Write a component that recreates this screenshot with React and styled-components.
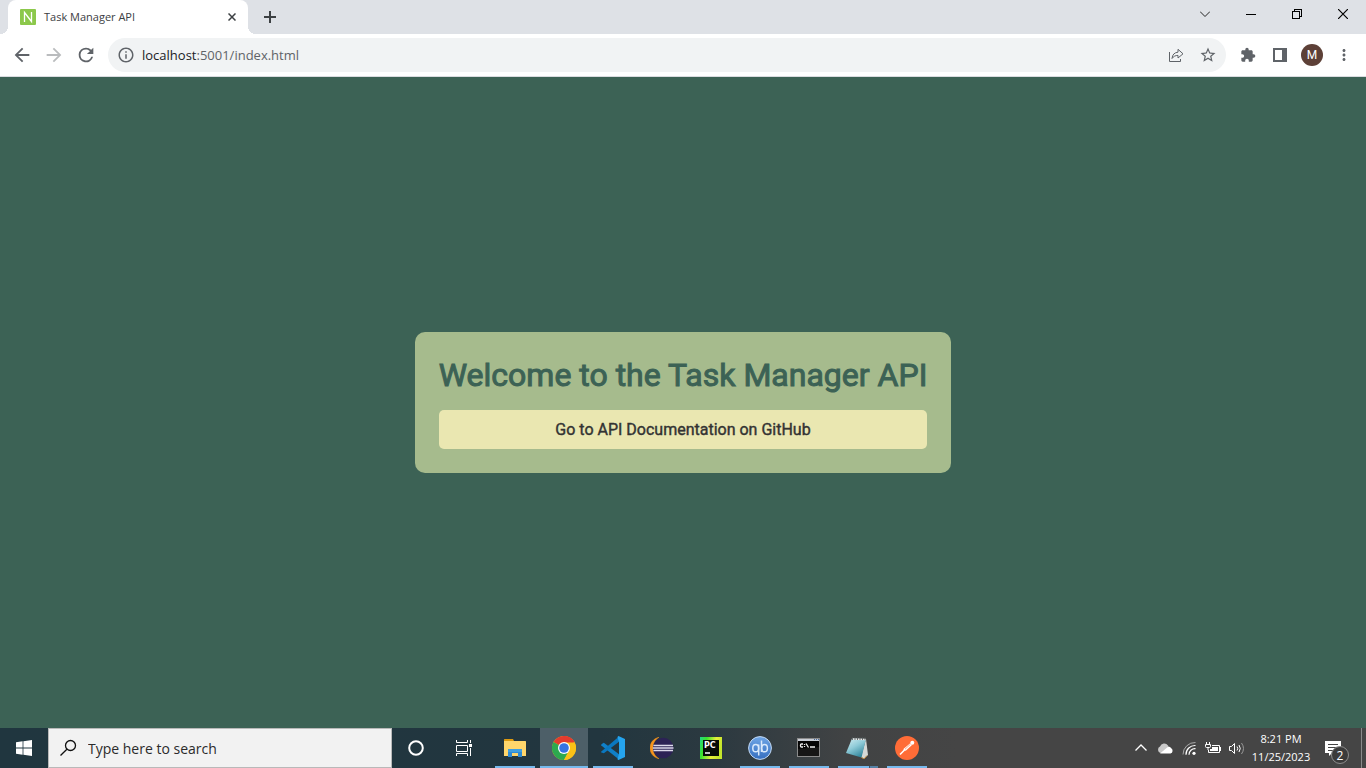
import React from "react";
import styled, { createGlobalStyle, css } from "styled-components";

const GlobalStyle = createGlobalStyle`
  * { box-sizing: border-box; }
  body { margin: 0; font-family: "Open Sans", "Noto Sans", sans-serif; }
  button { font: inherit; color: inherit; border: 0; padding: 0; background: none; cursor: pointer; }
  svg { display: block; flex: none; }
`;

const Desktop = styled.div`
  display: flex;
  flex-direction: column;
  min-height: 100vh;
`;

const center = css`
  display: flex;
  align-items: center;
  justify-content: center;
`;

/* ---------- browser ---------- */

const TabStrip = styled.header`
  display: flex;
  height: 34px;
  padding-left: 8px;
  background: #dee1e6;
`;

const Tab = styled.div`
  position: relative;
  display: flex;
  align-items: center;
  gap: 8px;
  width: 240px;
  padding: 0 8px 0 12px;
  border-radius: 8px 8px 0 0;
  background: #fff;
  color: #3c4043;

  &::before,
  &::after {
    content: "";
    position: absolute;
    bottom: 0;
    width: 8px;
    height: 8px;
  }
  &::before {
    right: 100%;
    background: radial-gradient(circle at 0 0, transparent 8px, #fff 8px);
  }
  &::after {
    left: 100%;
    background: radial-gradient(circle at 100% 0, transparent 8px, #fff 8px);
  }
`;

const TabTitle = styled.span`
  flex: 1;
  font-size: 11px;
  line-height: 16px;
`;

const TabButton = styled.button`
  ${center}
  width: ${(p) => p.$size}px;
  height: ${(p) => p.$size}px;
`;

const NewTab = styled(TabButton)`
  margin: 3px 0 0 8px;
`;

const WindowControls = styled.div`
  display: flex;
  margin-left: auto;
  height: 28px;
`;

const WindowButton = styled.button`
  ${center}
  width: 46px;
`;

const Toolbar = styled.nav`
  display: flex;
  align-items: center;
  height: 43px;
  padding: 0 6px;
  background: #fff;
  border-bottom: 1px solid #dadce0;
`;

const ToolButton = styled.button`
  ${center}
  width: 32px;
  height: 32px;
  flex: none;
`;

const AddressBar = styled.div`
  flex: 1;
  display: flex;
  align-items: center;
  height: 34px;
  margin: 0 6px;
  padding: 0 2px 0 9px;
  border-radius: 17px;
  background: #f1f3f4;
`;

const Address = styled.div`
  flex: 1;
  padding-left: 7px;
  font-size: 13px;
  line-height: 20px;
  color: #5f6368;

  b { font-weight: 400; color: #202124; }
`;

const Avatar = styled.span`
  ${center}
  width: 22px;
  height: 22px;
  border-radius: 50%;
  background: #5d4037;
  color: #fff;
  font: 12px Roboto, sans-serif;
`;

/* ---------- page ---------- */

const Page = styled.main`
  ${center}
  flex: 1;
  background: #3c6255;
  font-family: Roboto, sans-serif;
`;

const Card = styled.section`
  display: flex;
  flex-direction: column;
  gap: 16px;
  padding: 24px;
  border-radius: 10px;
  background: #a6bb8d;
`;

const Heading = styled.h1`
  margin: 0;
  font-size: 32px;
  font-weight: 400;
  line-height: 38px;
  color: #3c6255;
  -webkit-text-stroke: 1px currentColor;
`;

const DocsLink = styled.a`
  padding: 10px;
  border-radius: 5px;
  background: #eae7b1;
  color: #333;
  font-size: 16px;
  line-height: 19px;
  text-align: center;
  text-decoration: none;
  -webkit-text-stroke: 0.025em currentColor;
`;

/* ---------- taskbar ---------- */

const Taskbar = styled.footer`
  display: flex;
  height: 40px;
  background: linear-gradient(90deg, #20363f 0%, #22363f 44%, #2b3940 52%, #414344 62%, #454545 70%, #454545 100%);
  color: #fff;
`;

const TaskButton = styled.button`
  ${center}
  position: relative;
  width: 48px;
  height: 40px;
  flex: none;
  background: ${(p) => (p.$active ? "#4d5f68" : "none")};

  &::after {
    content: "";
    display: ${(p) => (p.$open ? "block" : "none")};
    position: absolute;
    bottom: 0;
    left: ${(p) => (p.$active ? 0 : 4)}px;
    right: ${(p) => (p.$active ? 0 : 4)}px;
    height: 2px;
    background: ${(p) => (p.$stacked ? "linear-gradient(90deg, #76b9ed 31px, #3a5468 31px, #3a5468 32px, #5682a6 32px)" : "#76b9ed")};
  }
`;

const Search = styled.label`
  display: flex;
  align-items: center;
  gap: 10px;
  width: 344px;
  padding-left: 11px;
  background: #f2f2f2;
  border: 1px solid #b9b9b9;

  input {
    flex: 1;
    min-width: 0;
    padding: 0;
    border: 0;
    outline: 0;
    background: none;
    font: 14px "Open Sans", sans-serif;
    color: #2b2b2b;
  }
  input::placeholder { color: #2b2b2b; opacity: 1; }
`;

const Apps = styled.div`
  display: flex;
  gap: 1px;
  padding-left: 3px;
`;

const Tray = styled.div`
  display: flex;
  align-items: stretch;
  margin-left: auto;
`;

const TrayButton = styled.button`
  ${center}
  width: 24px;
`;

const Clock = styled.button`
  width: 64px;
  font-size: 11px;
  line-height: 18px;
  text-align: center;
`;

const Notifications = styled.button`
  ${center}
  position: relative;
  width: 40px;
`;

const Count = styled.span`
  ${center}
  position: absolute;
  left: 18px;
  top: 18px;
  width: 18px;
  height: 18px;
  border: 1px solid #8d8d8d;
  border-radius: 50%;
  background: #3b3b3b;
  font-size: 12px;
`;

const ShowDesktop = styled.button`
  width: 5px;
  margin-left: 8px;
  border-left: 1px solid #8a8a8a;
`;

/* ---------- icons ---------- */

function Material({ d, size = 20, color = "#5f6368" }) {
  return (
    <svg width={size} height={size} viewBox="0 0 24 24" fill={color} aria-hidden="true">
      <path d={d} />
    </svg>
  );
}

function Stroke({ d, w, h, color = "#000", width = 1, crisp }) {
  return (
    <svg width={w} height={h} viewBox={`0 0 ${w} ${h}`} fill="none" stroke={color} strokeWidth={width} shapeRendering={crisp ? "crispEdges" : "auto"} aria-hidden="true">
      <path d={d} />
    </svg>
  );
}

const paths = {
  back: "M20 11H7.83l5.59-5.59L12 4l-8 8 8 8 1.41-1.41L7.83 13H20v-2z",
  forward: "M12 4l-1.41 1.41L16.17 11H4v2h12.17l-5.58 5.59L12 20l8-8z",
  reload: "M17.65 6.35A7.96 7.96 0 0 0 12 4a8 8 0 1 0 7.73 10h-2.08A6 6 0 1 1 12 6c1.66 0 3.14.69 4.22 1.78L13 11h7V4l-2.35 2.35z",
  info: "M11 7h2v2h-2zm0 4h2v6h-2zm1-9C6.48 2 2 6.48 2 12s4.48 10 10 10 10-4.48 10-10S17.52 2 12 2zm0 18c-4.41 0-8-3.59-8-8s3.59-8 8-8 8 3.59 8 8-3.59 8-8 8z",
  star: "M22 9.24l-7.19-.62L12 2 9.19 8.63 2 9.24l5.46 4.73L5.82 21 12 17.27 18.18 21l-1.63-7.03L22 9.24zM12 15.4l-3.76 2.27 1-4.28-3.32-2.88 4.38-.38L12 6.1l1.71 4.04 4.38.38-3.32 2.88 1 4.28L12 15.4z",
  puzzle: "M20.5 11H19V7c0-1.1-.9-2-2-2h-4V3.5a2.5 2.5 0 0 0-5 0V5H4c-1.1 0-1.99.9-1.99 2v3.8H3.5c1.49 0 2.7 1.21 2.7 2.7s-1.21 2.7-2.7 2.7H2V20c0 1.1.9 2 2 2h3.8v-1.5c0-1.49 1.21-2.7 2.7-2.7s2.7 1.21 2.7 2.7V22H17c1.1 0 2-.9 2-2v-4h1.5a2.5 2.5 0 0 0 0-5z",
  more: "M12 8c1.1 0 2-.9 2-2s-.9-2-2-2-2 .9-2 2 .9 2 2 2zm0 2c-1.1 0-2 .9-2 2s.9 2 2 2 2-.9 2-2-.9-2-2-2zm0 6c-1.1 0-2 .9-2 2s.9 2 2 2 2-.9 2-2-.9-2-2-2z",
};

const Favicon = () => (
  <svg width="16" height="16" viewBox="0 0 16 16" aria-hidden="true">
    <rect width="16" height="16" rx="1" fill="#8cc84b" />
    <path d="M4.5 13V3.5L11.5 12.5V3" fill="none" stroke="#fff" strokeWidth="1.3" />
  </svg>
);

const ShareIcon = () => (
  <svg width="16" height="16" viewBox="0 0 16 16" fill="none" stroke="#5f6368" aria-hidden="true">
    <path d="M1.5 5V14.5H12.5V12" />
    <path d="M4 11.5C4.4 7.5 6.5 5.5 10 5.2V2.3L15 6.8L10 11V8.4C7.5 8.4 5.5 9.3 4 11.5Z" strokeLinejoin="round" />
  </svg>
);

const SidePanelIcon = () => (
  <svg width="14" height="14" viewBox="0 0 14 14" aria-hidden="true">
    <path fill="#5f6368" fillRule="evenodd" d="M0 0H14V14H0ZM2 2V12H9V2Z" />
  </svg>
);

const WindowsIcon = () => (
  <svg width="16" height="16" viewBox="0 0 16 16" fill="#fff" aria-hidden="true">
    <path d="M0 2.2L6.6 1.3V7.6H0ZM7.4 1.2L16 0V7.6H7.4ZM0 8.4H6.6V14.7L0 13.8ZM7.4 8.4H16V16L7.4 14.8Z" />
  </svg>
);

const SearchIcon = () => (
  <svg width="18" height="18" viewBox="0 0 18 18" fill="none" stroke="#111" strokeWidth="1.3" aria-hidden="true">
    <circle cx="10.5" cy="6.5" r="5" />
    <path d="M6.900 10.2L.5 16.5" />
  </svg>
);

const CortanaIcon = () => (
  <svg width="16" height="16" viewBox="0 0 16 16" aria-hidden="true">
    <circle cx="8" cy="8" r="6.8" fill="none" stroke="#fff" strokeWidth="2" />
  </svg>
);

const TaskViewIcon = () => (
  <svg width="17" height="16" viewBox="0 0 17 16" fill="none" stroke="#fff" aria-hidden="true">
    <path d="M.5 0V2.5H11.5V0M.5 5.5H11.5V11.5H.5ZM.5 16V13.5H11.5V16M14.5 0V3M14.5 8V16" />
    <path fill="#fff" stroke="none" d="M13 4H16V7H13Z" />
  </svg>
);

const FolderIcon = () => (
  <svg width="22" height="20" viewBox="0 0 22 20" aria-hidden="true">
    <path d="M0 3H21.5Q22 3 22 3.5V18H0Z" fill="#ffd66b" />
    <path d="M0 1.5Q0 1 .5 1H9L10 3H0Z" fill="#dd9a10" />
    <path d="M4 19V12Q4 11 5 11H17Q18 11 18 12V19H14V15H8V19Z" fill="#2f8ad2" />
    <path d="M4 14V12Q4 11 5 11H17Q18 11 18 12V14Z" fill="#3f9fe0" />
  </svg>
);

const ChromeIcon = () => (
  <svg width="24" height="24" viewBox="0 0 24 24" aria-hidden="true">
    <circle cx="12" cy="12" r="12" fill="#fbc116" />
    <path d="M12 12L1.6 6A12 12 0 0 1 22.4 6Z" fill="#e33b2e" />
    <path d="M12 6.5H22.7A12 12 0 0 0 12 0Z" fill="#e33b2e" />
    <path d="M12 12L1.6 6A12 12 0 0 0 12 24L17 14.7Z" fill="#2da94f" />
    <path d="M17 14.7L12 24A12 12 0 0 0 22.7 6.5H12Z" fill="#fbc116" />
    <circle cx="12" cy="12" r="6" fill="#fff" />
    <circle cx="12" cy="12" r="4.8" fill="#3574e2" />
  </svg>
);

const CodeIcon = () => (
  <svg width="24" height="24" viewBox="0 0 24 24" aria-hidden="true">
    <path d="M.3 8.5L2.2 7Q2.7 6.7 3.2 7L18 18.3V23.6L.3 9.5Q-.1 9 .3 8.5Z" fill="#1080c8" />
    <path d="M.3 15.5L18 .4V5.7L3.2 17Q2.7 17.3 2.2 17L.3 16.5Q-.1 16 .3 15.5Z" fill="#0a78c0" />
    <path d="M17.5 0L24 3V21L17.5 24Q16.7 24 16.5 23L18 18V6L16.5 1.2Q16.7 .2 17.5 0Z" fill="#25a4ee" />
  </svg>
);

const EclipseIcon = () => (
  <svg width="24" height="22" viewBox="0 0 24 22" aria-hidden="true">
    <path d="M9 .3C-3 3 -3 19 9 21.7C1 17.5 1 4.5 9 .3Z" fill="#f7941e" stroke="#f7941e" strokeWidth=".5" />
    <circle cx="13.2" cy="11" r="10.3" fill="#2c2255" />
    <path d="M3.4 8.5H23M2.8 11H23.5M3.4 13.5H23" stroke="#dcd9ea" strokeWidth="1.6" />
  </svg>
);

const AppLetters = styled.text`
  font-family: ${(p) => p.$family};
  font-size: ${(p) => p.$size}px;
  font-weight: ${(p) => p.$weight || 400};
  fill: #fff;
`;

const PyCharmIcon = () => (
  <svg width="22" height="22" viewBox="0 0 22 22" aria-hidden="true">
    <defs>
      <linearGradient id="pycharm" x1="0" y1="0" x2="1" y2="0.3">
        <stop offset="0" stopColor="#21d789" />
        <stop offset="0.3" stopColor="#3be22c" />
        <stop offset="0.7" stopColor="#e8ef3a" />
        <stop offset="1" stopColor="#c4e52c" />
      </linearGradient>
    </defs>
    <rect width="22" height="22" fill="url(#pycharm)" />
    <rect x="3" y="3" width="16" height="16" fill="#070d08" />
    <AppLetters x="4" y="11" $family='"DejaVu Sans", sans-serif' $size={8} $weight={700}>PC</AppLetters>
    <path d="M5 16H10" stroke="#fff" strokeWidth="1.5" />
  </svg>
);

const TorrentIcon = () => (
  <svg width="24" height="24" viewBox="0 0 24 24" aria-hidden="true">
    <defs>
      <linearGradient id="torrent" x1="0" y1="0" x2="0" y2="1">
        <stop offset="0" stopColor="#6fa6e6" />
        <stop offset="1" stopColor="#356ebf" />
      </linearGradient>
    </defs>
    <circle cx="12" cy="12" r="11.4" fill="url(#torrent)" stroke="#c4daf4" strokeWidth="1" />
    <g fill="none" stroke="#d9e9fb" strokeWidth="1.5">
      <ellipse cx="7.7" cy="12.2" rx="2.9" ry="3.6" />
      <path d="M10.7 8.5V19.5M13.5 4.5V16" />
      <ellipse cx="16.5" cy="12.2" rx="2.9" ry="3.6" />
    </g>
  </svg>
);

const TerminalIcon = () => (
  <svg width="24" height="20" viewBox="0 0 24 20" aria-hidden="true">
    <rect x=".5" y=".5" width="22" height="18" fill="#050505" stroke="#8b8b8b" />
    <path d="M1 1H22V3H1Z" fill="#c9ced6" />
    <path d="M17 1.5H18M19 1.5H20M21 1.5H22" stroke="#496b9c" />
    <path d="M6 6H4.5Q3.5 6 3.5 7V8Q3.5 9 4.5 9H6M7.5 6V7M7.5 8V9M9 5.5L11.500 9.5M13 9H18" fill="none" stroke="#eee" strokeWidth="1.3" />
    <path d="M1 11L22 9V18H1Z" fill="#fff" opacity=".07" />
  </svg>
);

const NotepadIcon = () => (
  <svg width="24" height="22" viewBox="0 0 24 22" aria-hidden="true">
    <defs>
      <linearGradient id="notepad" x1="0" y1="0" x2="0.6" y2="1">
        <stop offset="0" stopColor="#d6eef2" />
        <stop offset=".5" stopColor="#8fcbd8" />
        <stop offset="1" stopColor="#35899e" />
      </linearGradient>
    </defs>
    <path d="M20 2L22 18L18 22L15 20Z" fill="#d5d8d6" />
    <path d="M15 20L18 22L21 18.5" fill="none" stroke="#b9853b" />
    <path d="M6 1.5L20 2L15.5 20.500L0 16Z" fill="url(#notepad)" />
    <path d="M6 2L20 2.500" stroke="#e9e9e9" strokeWidth="1.5" />
    <path d="M6.500 0V3M9 0V3M11.500 0V3M14 0V3M16.500 0V3M19 0V3" stroke="#4f5556" strokeWidth=".8" />
  </svg>
);

const PostmanIcon = () => (
  <svg width="24" height="24" viewBox="0 0 24 24" aria-hidden="true">
    <circle cx="12" cy="12" r="12" fill="#ff6c37" />
    <circle cx="17.3" cy="6.8" r="2" fill="#fff" />
    <path d="M15.3 7.2L17 9.1L10.8 14.8L8.500 14.5L8.7 12.8Z" fill="#fff" />
    <path d="M9.5 14L5 18.5" stroke="#fff" strokeWidth="1.6" />
    <path d="M10 13.2L15.5 8.2" stroke="#ff6c37" strokeWidth=".6" />
  </svg>
);

const CloudIcon = () => (
  <svg width="16" height="11" viewBox="0 0 16 11" aria-hidden="true">
    <path d="M3.5 10A3.5 3.5 0 0 1 3 3.5A4.5 4.5 0 0 1 11 2.5L13 6L6 10Z" fill="#c9c9c9" />
    <path d="M3 10.5L9 5.5Q12 2.5 14 5A3 3 0 0 1 13.5 10.5Z" fill="#fff" />
  </svg>
);

const WifiIcon = () => (
  <svg width="14" height="14" viewBox="0 0 14 14" fill="none" stroke="#fff" aria-hidden="true">
    <path d="M1 13.5A12 12 0 0 1 13.5 1.5" stroke="#aaa" />
    <path d="M4 13.7A9 9 0 0 1 13.5 4.5M7 13.7A6 6 0 0 1 13.5 7.7" strokeWidth="1.2" />
    <circle cx="12" cy="12.3" r="1.600" fill="#fff" stroke="none" />
  </svg>
);

const BatteryIcon = () => (
  <svg width="16" height="12" viewBox="0 0 16 12" fill="none" stroke="#fff" aria-hidden="true">
    <path d="M7 3.5H14.5V10.5H3.5V8M15.5 5V9M1.5 0V2M4.5 0V2M.5 2.5H5.5V4.5Q5.5 5.5 4.5 5.5H1.5Q.5 5.5 .5 4.5ZM3 6V8" />
    <path d="M7 5H13V9H5V7H7Z" fill="#fff" stroke="none" />
  </svg>
);

const VolumeIcon = () => (
  <svg width="16" height="13" viewBox="0 0 16 13" fill="none" stroke="#fff" aria-hidden="true">
    <path d="M.5 4.5H2.5L5.5 1.5V11.5L2.5 8.5H.5Z" />
    <path d="M8 4.5Q9.5 6.5 8 8.5M10 3Q12.5 6.5 10 10" />
    <path d="M12.500 1Q16.5 6.5 12.500 12" stroke="#999" />
  </svg>
);

const MessageIcon = () => (
  <svg width="16" height="17" viewBox="0 0 16 17" aria-hidden="true">
    <path d="M0 1H16V13H7L4 16V13H0Z" fill="#fff" />
    <path d="M3 4.5H13M3 7.5H13M3 10.5H9" stroke="#454545" />
  </svg>
);

const apps = [
  { name: "File Explorer", Icon: FolderIcon, open: true },
  { name: "Google Chrome", Icon: ChromeIcon, open: true, active: true },
  { name: "Visual Studio Code", Icon: CodeIcon, open: true },
  { name: "Eclipse", Icon: EclipseIcon },
  { name: "PyCharm", Icon: PyCharmIcon },
  { name: "qBittorrent", Icon: TorrentIcon, open: true },
  { name: "Command Prompt", Icon: TerminalIcon, open: true },
  { name: "Notepad", Icon: NotepadIcon, open: true, stacked: true },
  { name: "Postman", Icon: PostmanIcon, open: true },
];

export default function App() {
  return (
    <Desktop>
      <GlobalStyle />
      <TabStrip>
        <Tab>
          <Favicon />
          <TabTitle>Task Manager API</TabTitle>
          <TabButton $size={16} aria-label="Close tab">
            <Stroke w={8} h={8} d="M.5 .5L7.500 7.500M7.500 .5L.5 7.500" color="#3c4043" width={1.5} />
          </TabButton>
        </Tab>
        <NewTab $size={28} aria-label="New tab">
          <Stroke w={12} h={12} d="M6 0V12M0 6H12" color="#3c4043" width={2} />
        </NewTab>
        <WindowControls>
          <WindowButton aria-label="Search tabs"><Stroke w={10} h={6} d="M0 .5L5 5.500L10 .5" color="#222" /></WindowButton>
          <WindowButton aria-label="Minimize"><Stroke w={10} h={1} d="M0 .5H10" crisp /></WindowButton>
          <WindowButton aria-label="Restore"><Stroke w={10} h={10} d="M.5 2.500H7.500V9.500H.5ZM2.500 2.500V.5H9.500V7.500H7.500" crisp /></WindowButton>
          <WindowButton aria-label="Close"><Stroke w={10} h={10} d="M0 0L10 10M10 0L0 10" width={1.2} /></WindowButton>
        </WindowControls>
      </TabStrip>

      <Toolbar>
        <ToolButton aria-label="Back"><Material d={paths.back} size={22} /></ToolButton>
        <ToolButton aria-label="Forward"><Material d={paths.forward} size={22} color="#babcbe" /></ToolButton>
        <ToolButton aria-label="Reload"><Material d={paths.reload} size={22} /></ToolButton>
        <AddressBar>
          <Material d={paths.info} size={18} />
          <Address><b>localhost</b>:5001/index.html</Address>
          <ToolButton aria-label="Share"><ShareIcon /></ToolButton>
          <ToolButton aria-label="Bookmark"><Material d={paths.star} size={18} /></ToolButton>
        </AddressBar>
        <ToolButton aria-label="Extensions"><Material d={paths.puzzle} size={16} /></ToolButton>
        <ToolButton aria-label="Side panel"><SidePanelIcon /></ToolButton>
        <ToolButton aria-label="Profile"><Avatar>M</Avatar></ToolButton>
        <ToolButton aria-label="Menu"><Material d={paths.more} size={18} /></ToolButton>
      </Toolbar>

      <Page>
        <Card>
          <Heading>Welcome to the Task Manager API</Heading>
          <DocsLink href="#documentation">Go to API Documentation on GitHub</DocsLink>
        </Card>
      </Page>

      <Taskbar>
        <TaskButton aria-label="Start"><WindowsIcon /></TaskButton>
        <Search>
          <SearchIcon />
          <input type="text" placeholder="Type here to search" aria-label="Type here to search" />
        </Search>
        <TaskButton aria-label="Cortana"><CortanaIcon /></TaskButton>
        <TaskButton aria-label="Task view"><TaskViewIcon /></TaskButton>
        <Apps>
          {apps.map(({ name, Icon, open, active, stacked }) => (
            <TaskButton key={name} aria-label={name} $open={open} $active={active} $stacked={stacked}>
              <Icon />
            </TaskButton>
          ))}
        </Apps>
        <Tray>
          <TrayButton aria-label="Show hidden icons"><Stroke w={12} h={8} d="M.5 6.500L6 1L11.500 6.500" color="#fff" width={1.3} /></TrayButton>
          <TrayButton aria-label="OneDrive"><CloudIcon /></TrayButton>
          <TrayButton aria-label="Network"><WifiIcon /></TrayButton>
          <TrayButton aria-label="Battery"><BatteryIcon /></TrayButton>
          <TrayButton aria-label="Volume"><VolumeIcon /></TrayButton>
          <Clock>8:21 PM<br />11/25/2023</Clock>
          <Notifications aria-label="Notifications"><MessageIcon /><Count>2</Count></Notifications>
          <ShowDesktop aria-label="Show desktop" />
        </Tray>
      </Taskbar>
    </Desktop>
  );
}
